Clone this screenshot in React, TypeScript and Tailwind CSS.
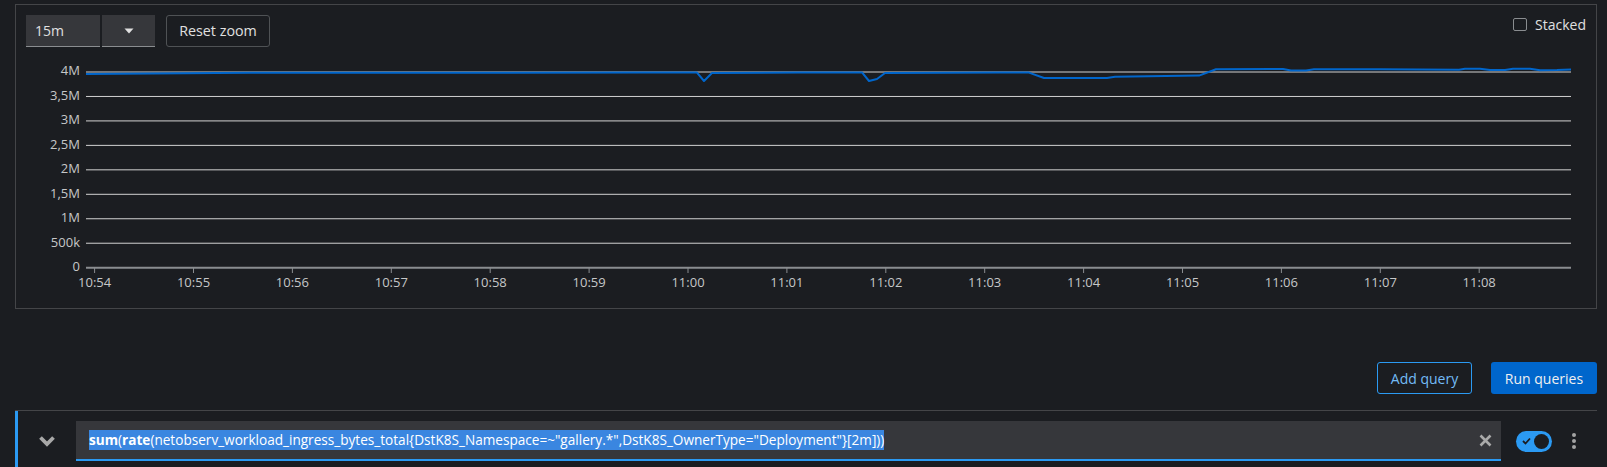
import React from "react";

const FONT = '"Open Sans", "Noto Sans", Arial, sans-serif';

const yLabels = ["4M", "3,5M", "3M", "2,5M", "2M", "1,5M", "1M", "500k", "0"];
const xLabels = [
  "10:54", "10:55", "10:56", "10:57", "10:58", "10:59", "11:00", "11:01",
  "11:02", "11:03", "11:04", "11:05", "11:06", "11:07", "11:08",
];

const pts: [number, number][] = [
  [86, 74], [150, 73.6], [250, 72.8], [350, 72.8], [500, 72.8], [640, 72.6],
  [697, 72.6], [704, 81], [712, 73], [800, 72.6], [862, 72.4], [869, 81],
  [877, 79], [885, 73], [1000, 72.4], [1029, 72.6], [1044, 78], [1107, 78],
  [1115, 76.8], [1199, 75.6], [1216, 69.2], [1283, 69], [1291, 70.4],
  [1306, 70.4], [1314, 69.3], [1380, 69.3], [1459, 69.7], [1465, 68.7],
  [1480, 68.7], [1490, 70], [1505, 70], [1513, 68.7], [1530, 68.7],
  [1540, 70.2], [1557, 70], [1571, 69.5],
];

function Chart() {
  const gy = (i: number) => 72 + 24.46 * i;
  const tx = (i: number) => 94.6 + 98.9 * i;
  const d = pts.map((p, i) => (i === 0 ? "M" : "L") + p[0] + " " + p[1]).join(" ");
  return (
    <svg width={1580} height={261} className="block">
      <g transform="translate(-16,-47)">
        {yLabels.map((l, i) => (
          <g key={l}>
            <line
              x1={86}
              x2={1571}
              y1={gy(i)}
              y2={gy(i)}
              stroke={i === 8 ? "#8a8d90" : "#d2d2d2"}
              strokeWidth={i === 8 ? 2 : 1}
            />
            <text
              x={80}
              y={gy(i)}
              textAnchor="end"
              dominantBaseline="middle"
              fill="#c6c7c8"
              fontSize={13}
              fontFamily={FONT}
            >
              {l}
            </text>
          </g>
        ))}
        {xLabels.map((l, i) => (
          <g key={l}>
            <line x1={tx(i)} x2={tx(i)} y1={268} y2={273} stroke="#8a8d90" strokeWidth={1} />
            <text
              x={tx(i)}
              y={287}
              textAnchor="middle"
              fill="#c6c7c8"
              fontSize={13}
              fontFamily={FONT}
            >
              {l}
            </text>
          </g>
        ))}
        <path d={d} fill="none" stroke="#0066cc" strokeWidth={2} strokeLinejoin="round" />
      </g>
    </svg>
  );
}

export default function App() {
  return (
    <div
      className="w-[1607px] h-[467px] overflow-hidden bg-[#1b1d21] pt-[4px] pl-[15px] pr-[10px] text-[14px]"
      style={{ fontFamily: FONT }}
    >
      <div className="h-[305px] border border-[#444548] flex flex-col">
        <div className="flex items-start pt-[10px] pl-[10px] pr-[10px] h-[42px]">
          <div className="flex h-[32px] gap-[2px]">
            <div className="w-[74px] h-[32px] bg-[#36373b] border-b border-[#8a8d90] flex items-center pl-[9px] text-[#e0e0e0]">
              15m
            </div>
            <div className="w-[53px] h-[32px] bg-[#36373b] border-b border-[#8a8d90] flex items-center justify-center">
              <svg width="10" height="6" viewBox="0 0 10 6">
                <path d="M0.5 0.5 L9.5 0.5 L5 5.5 Z" fill="#e0e0e0" />
              </svg>
            </div>
          </div>
          <div className="ml-[11px] w-[104px] h-[32px] border border-[#4f5255] rounded-[3px] flex items-center justify-center text-[#e0e0e0] text-[14.3px]">
            Reset zoom
          </div>
          <div className="flex-1" />
          <div className="flex items-center mt-[1px] h-[16px]">
            <div className="w-[14px] h-[13px] border-[1.5px] border-[#8a8d90] rounded-[2px]" />
            <span className="ml-[8px] text-[#e0e0e0] text-[14px]">Stacked</span>
          </div>
        </div>
        <Chart />
      </div>

      <div className="mt-[53px] flex justify-end h-[32px]">
        <div className="w-[95px] h-[32px] border border-[#2b9af3] rounded-[3px] flex items-center justify-center text-[#73bcf7]">
          Add query
        </div>
        <div className="ml-[19px] w-[106px] h-[32px] bg-[#0066cc] rounded-[3px] flex items-center justify-center text-[#f0f0f0]">
          Run queries
        </div>
      </div>

      <div className="mt-[16px] border-t border-[#444548]">
        <div className="border-l-[3px] border-[#2b9af3] flex items-center pt-[10px] pb-[10px]">
          <div className="w-[58px] h-[40px] flex items-center justify-center">
            <svg width="18" height="12" viewBox="0 0 18 12">
              <path d="M2.5 2.5 L9 9 L15.5 2.5" fill="none" stroke="#a8a8a8" strokeWidth="3.8" />
            </svg>
          </div>
          <div className="w-[1425px] h-[40px] bg-[#36373b] border-b-2 border-[#2b9af3] flex items-center pl-[13px] pr-[9px]">
            <div className="flex-1 flex items-center">
              <span className="bg-[#3a86e0] text-white text-[13.6px] leading-[20px] whitespace-nowrap">
                <b>sum</b>(<b>rate</b>(netobserv_workload_ingress_bytes_total{"{"}DstK8S_Namespace=~"gallery.*",DstK8S_OwnerType="Deployment"{"}"}[2m]))
              </span>
            </div>
            <svg width="13" height="13" viewBox="0 0 13 13">
              <path d="M1.5 1.5 L11.5 11.5 M11.5 1.5 L1.5 11.5" stroke="#aaaaaa" strokeWidth="2.6" />
            </svg>
          </div>
          <div className="ml-[15px] w-[36px] h-[21px] rounded-full bg-[#2b9af3] flex items-center justify-between pl-[6px] pr-[3px]">
            <svg width="9" height="8" viewBox="0 0 9 8">
              <path d="M1 4 L3.5 6.5 L8 1.5" fill="none" stroke="#1b1d21" strokeWidth="1.8" />
            </svg>
            <div className="w-[15px] h-[15px] rounded-full bg-[#1b1d21]" />
          </div>
          <div className="ml-[20px] flex flex-col gap-[2px]">
            <div className="w-[4px] h-[4px] rounded-full bg-[#a3a3a3]" />
            <div className="w-[4px] h-[4px] rounded-full bg-[#a3a3a3]" />
            <div className="w-[4px] h-[4px] rounded-full bg-[#a3a3a3]" />
          </div>
        </div>
      </div>
    </div>
  );
}
